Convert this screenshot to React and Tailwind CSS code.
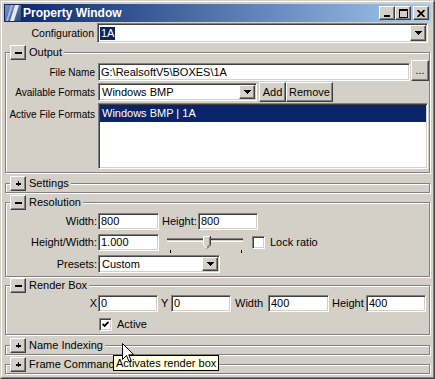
import React from 'react';

const raised =
  'border border-t-white border-l-white border-r-[#404040] border-b-[#404040] shadow-[inset_-1px_-1px_0_#808080]';
const sunken =
  'border border-t-[#808080] border-l-[#808080] border-r-white border-b-white shadow-[inset_1px_1px_0_#404040,inset_-1px_-1px_0_#d4d0c8]';

const Arrow = () => (
  <svg width="7" height="4" viewBox="0 0 7 4" shapeRendering="crispEdges">
    <path d="M0 0h7v1h-1v1h-1v1h-1v1h-1v-1h-1v-1h-1v-1h-1z" fill="#000" />
  </svg>
);

const Label = ({ className = '', children }) => (
  <div className={`flex items-center justify-end whitespace-nowrap ${className}`}>{children}</div>
);

const Field = ({ className = '', children }) => (
  <div className={`${sunken} bg-white flex items-center pl-[2px] whitespace-nowrap ${className}`}>{children}</div>
);

const Btn = ({ className = '', children }) => (
  <div className={`${raised} bg-[#d4d0c8] flex items-center justify-center whitespace-nowrap ${className}`}>{children}</div>
);

const Combo = ({ className = '', text, sel }) => (
  <div className={`${sunken} bg-white p-[1px] flex items-stretch ${className}`}>
    <div className="flex-1 flex items-center pl-[1px] overflow-hidden whitespace-nowrap">
      <span className={sel ? 'bg-[#0a246a] text-white px-[1px]' : 'px-[1px]'}>{text}</span>
    </div>
    <div className={`${raised} bg-[#d4d0c8] w-[16px] flex items-center justify-center`}>
      <Arrow />
    </div>
  </div>
);

const Check = ({ checked }) => (
  <div className={`${sunken} bg-white w-[13px] h-[13px] flex items-center justify-center shrink-0`}>
    {checked && (
      <svg width="7" height="7" viewBox="0 0 7 7">
        <path d="M0.5 3 L2.5 5 L6.5 1" fill="none" stroke="#000" strokeWidth="1.8" />
      </svg>
    )}
  </div>
);

const Toggle = ({ open }) => (
  <div className={`${raised} bg-[#d4d0c8] w-[16px] h-[15px] flex items-center justify-center shrink-0`}>
    <svg width="7" height="7" viewBox="0 0 7 7" shapeRendering="crispEdges">
      {open ? (
        <rect x="0" y="3" width="7" height="2" fill="#000" />
      ) : (
        <>
          <rect x="1" y="3" width="5" height="1.5" fill="#000" />
          <rect x="2.75" y="1.25" width="1.5" height="5" fill="#000" />
        </>
      )}
    </svg>
  </div>
);

function Group({ title, open, className = '', children }) {
  return (
    <fieldset className={`border border-[#808080] shadow-[inset_1px_1px_0_#fff,1px_1px_0_#fff] ${className}`}>
      <legend className="ml-[4px] pr-[2px] bg-[#d4d0c8]">
        <div className="flex items-center h-[15px]">
          <Toggle open={open} />
          <span className="ml-[3px] text-[11px]">{title}</span>
        </div>
      </legend>
      {children}
    </fieldset>
  );
}

const AppIcon = () => (
  <svg width="16" height="16" viewBox="0 0 16 16" className="shrink-0">
    <defs>
      <linearGradient id="icbg" x1="0" y1="0" x2="1" y2="1">
        <stop offset="0" stopColor="#7f95c0" />
        <stop offset="1" stopColor="#2c4a86" />
      </linearGradient>
    </defs>
    <rect width="16" height="16" fill="url(#icbg)" />
    <polygon points="1,16 6,0 8,0 3,16" fill="#a9b9d8" />
    <polygon points="5,16 10,0 14,0 9,16" fill="#e4e9f3" />
  </svg>
);

export default function App() {
  return (
    <div className="relative w-[435px] h-[379px] overflow-hidden bg-[#d4d0c8] text-black text-[10.5px] leading-[13px] font-['Liberation_Sans',Arial,sans-serif] border border-t-[#d4d0c8] border-l-[#d4d0c8] border-r-[#404040] border-b-[#404040]">
      <div className="h-full border border-t-white border-l-white border-r-[#808080] border-b-[#808080] p-[2px] flex flex-col">
        {/* title bar */}
        <div className="h-[18px] shrink-0 flex items-center bg-linear-to-r from-[#0a246a] to-[#a6caf0] pl-[1px] pr-[2px]">
          <AppIcon />
          <span className="ml-[2px] text-white font-bold text-[12px] leading-[14px]">Property Window</span>
          <div className="ml-auto flex">
            <Btn className="w-[16px] h-[14px]">
              <svg width="8" height="7" viewBox="0 0 8 7" shapeRendering="crispEdges">
                <rect x="1" y="5" width="6" height="2" fill="#000" />
              </svg>
            </Btn>
            <Btn className="w-[16px] h-[14px]">
              <svg width="9" height="9" viewBox="0 0 9 9" shapeRendering="crispEdges">
                <path d="M0 0h9v9H0z M1 2v6h7V2z" fill="#000" fillRule="evenodd" />
              </svg>
            </Btn>
            <Btn className="ml-[2px] w-[16px] h-[14px]">
              <svg width="8" height="7" viewBox="0 0 8 7">
                <path d="M0.5 0 L7.5 7 M7.5 0 L0.5 7" stroke="#000" strokeWidth="1.7" />
              </svg>
            </Btn>
          </div>
        </div>

        {/* configuration */}
        <div className="mt-[1px] h-[20px] shrink-0 flex items-stretch">
          <Label className="w-[93px] pr-[3px]">Configuration</Label>
          <Combo className="w-[331px] text-[11px]" text="1A" sel />
        </div>

        <div className="px-[1px] flex flex-col">
          <Group title="Output" open className="mt-[2px] pb-[3px]">
            <div className="flex items-end h-[21px]">
              <Label className="w-[92px] h-[18px] pr-[3px] text-[10px]">File Name</Label>
              <Field className="w-[312px] h-[18px] text-[11px]">{'G:\\RealsoftV5\\BOXES\\1A'}</Field>
              <Btn className="ml-[1px] w-[18px] h-[21px] items-end pb-[3px]">...</Btn>
            </div>
            <div className="mt-[1px] flex items-center h-[20px]">
              <Label className="w-[92px] h-[18px] pr-[3px] text-[10px]">Available Formats</Label>
              <Combo className="w-[159px] h-[18px] text-[11px]" text="Windows BMP" />
              <Btn className="ml-[2px] w-[27px] h-[20px] text-[11px]">Add</Btn>
              <Btn className="w-[47px] h-[20px] text-[11px]">Remove</Btn>
            </div>
            <div className="mt-[1px] flex">
              <Label className="w-[92px] h-[18px] pr-[3px] items-end text-[10px]">Active File Formats</Label>
              <div className={`${sunken} bg-white w-[330px] h-[66px] p-[1px] text-[11px]`}>
                <div className="h-[17px] bg-[#0a246a] text-white flex items-center pl-[2px]">Windows BMP | 1A</div>
              </div>
            </div>
          </Group>

          <Group title="Settings" className="mt-[3px] pb-[1px]" />

          <Group title="Resolution" open className="mt-[2px] pt-[3px] pb-[3px]">
            <div className="flex flex-col gap-[4px] text-[11px]">
              <div className="flex h-[17px]">
                <Label className="w-[92px] pr-[1px]">Width:</Label>
                <Field className="w-[61px]">800</Field>
                <Label className="ml-[3px] w-[36px] justify-start">Height:</Label>
                <Field className="w-[60px]">800</Field>
              </div>
              <div className="flex items-start h-[17px]">
                <Label className="w-[92px] h-[17px] pr-[1px]">Height/Width:</Label>
                <Field className="w-[61px] h-[17px]">1.000</Field>
                <svg width="80" height="20" viewBox="0 0 80 20" className="ml-[6px] shrink-0" shapeRendering="crispEdges">
                  <rect x="2" y="4" width="76" height="1" fill="#808080" />
                  <rect x="2" y="5" width="76" height="1" fill="#404040" />
                  <rect x="2" y="6" width="76" height="1" fill="#d4d0c8" />
                  <rect x="2" y="7" width="76" height="1" fill="#ffffff" />
                  <g transform="translate(38,2)">
                    <polygon points="0,0 8,0 8,9 4,13 0,9" fill="#d4d0c8" />
                    <path d="M0.5 9 V0.5 H7" stroke="#fff" fill="none" shapeRendering="auto" />
                    <path d="M7.5 0 V9 L4 12.5" stroke="#404040" fill="none" shapeRendering="auto" />
                    <path d="M6.5 1 V8.6 L4 11.2" stroke="#808080" fill="none" shapeRendering="auto" />
                    <path d="M0.5 9 L3.5 12" stroke="#fff" fill="none" shapeRendering="auto" />
                  </g>
                  <rect x="5" y="16" width="1" height="3" fill="#000" />
                  <rect x="76" y="16" width="1" height="3" fill="#000" />
                </svg>
                <div className="ml-[7px] h-[17px] flex items-center">
                  <Check />
                  <span className="ml-[5px] whitespace-nowrap">Lock ratio</span>
                </div>
              </div>
              <div className="flex h-[18px]">
                <Label className="w-[92px] pr-[1px]">Presets:</Label>
                <Combo className="w-[122px]" text="Custom" />
              </div>
            </div>
          </Group>

          <Group title="Render Box" open className="mt-[1px] pt-[2px] pb-[3px] text-[11px]">
            <div className="flex h-[17px]">
              <Label className="w-[92px] pr-[1px]">X</Label>
              <Field className="w-[60px]">0</Field>
              <Label className="ml-[3px] w-[10px] justify-start">Y</Label>
              <Field className="w-[60px]">0</Field>
              <Label className="ml-[4px] w-[33px] justify-start">Width</Label>
              <Field className="w-[61px]">400</Field>
              <Label className="ml-[3px] w-[34px] justify-start">Height</Label>
              <Field className="w-[60px]">400</Field>
            </div>
            <div className="mt-[5px] h-[14px] flex items-center pl-[93px]">
              <Check checked />
              <span className="ml-[5px]">Active</span>
            </div>
          </Group>

          <Group title="Name Indexing" className="mt-[3px] pb-[1px]" />
          <Group title="Frame Commands" className="mt-[2px] pb-[1px]" />
        </div>
      </div>

      {/* tooltip */}
      <div className="absolute left-[112px] top-[354px] h-[16px] px-[2px] bg-[#ffffe1] border border-black flex items-center whitespace-nowrap text-[11px]">
        Activates render box
      </div>

      {/* mouse pointer */}
      <svg width="13" height="20" viewBox="0 0 13 20" className="absolute left-[121px] top-[342px]">
        <path d="M0.5 0.5 L0.5 16.5 L4.5 12.5 L7 18.5 L9.2 17.6 L6.8 11.8 L11.8 11.8 Z" fill="#fff" stroke="#000" strokeWidth="1" strokeLinejoin="miter" />
      </svg>
    </div>
  );
}
